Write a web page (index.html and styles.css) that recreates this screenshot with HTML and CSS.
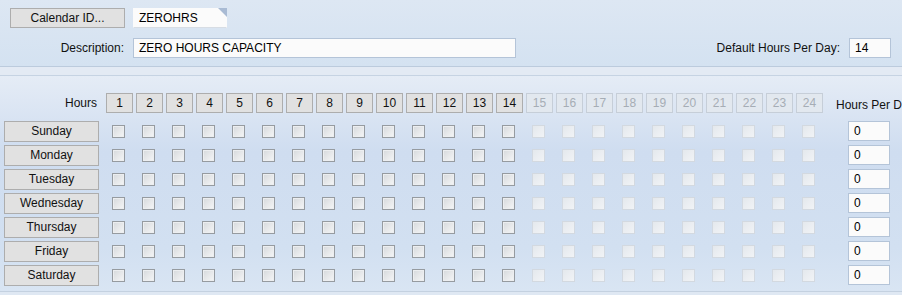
FILE: index.html
```html
<!DOCTYPE html>
<html lang="en">
<head>
    <meta charset="UTF-8">
    <meta name="viewport" content="width=device-width, initial-scale=1.0">
    <title>Calendar Maintenance</title>
    <link rel="stylesheet" href="styles.css">
</head>
<body>
    <div class="header-panel">
        <div class="row">
            <button class="btn btn-calendar">Calendar ID...</button>
            <div class="field field-id">ZEROHRS</div>
        </div>
        <div class="row row-desc">
            <label class="desc-label">Description:</label>
            <div class="field field-desc">ZERO HOURS CAPACITY</div>
            <div class="spacer"></div>
            <label class="default-label">Default Hours Per Day:</label>
            <div class="field field-small">14</div>
        </div>
    </div>
    <div class="divider"></div>

    <div class="hours-panel">
        <div class="hours-grid" id="hoursGrid">
            <div class="hours-label">Hours</div>
        </div>
    </div>

    <script>
        var grid = document.getElementById('hoursGrid');
        var days = ['Sunday', 'Monday', 'Tuesday', 'Wednesday', 'Thursday', 'Friday', 'Saturday'];
        var activeHours = 14;

        // header row with hour buttons
        for (var h = 1; h <= 24; h++) {
            var b = document.createElement('div');
            b.className = 'hour-btn' + (h > activeHours ? ' disabled' : '');
            b.innerText = h;
            grid.appendChild(b);
        }
        var perDay = document.createElement('div');
        perDay.className = 'perday-label';
        perDay.innerText = 'Hours Per Day';
        grid.appendChild(perDay);

        // one row per day
        days.forEach(function(day) {
            var d = document.createElement('div');
            d.className = 'day-btn';
            d.innerText = day;
            grid.appendChild(d);
            for (var h = 1; h <= 24; h++) {
                var c = document.createElement('div');
                c.className = 'cell';
                var box = document.createElement('span');
                box.className = 'chk' + (h > activeHours ? ' disabled' : '');
                c.appendChild(box);
                grid.appendChild(c);
            }
            var t = document.createElement('div');
            t.className = 'field field-perday';
            t.innerText = '0';
            grid.appendChild(t);
        });
    </script>
</body>
</html>
```

FILE: styles.css
```css
body {
    margin: 0;
    width: 902px;
    height: 295px;
    overflow: hidden;
    font-family: "Liberation Sans", Arial, sans-serif;
    font-size: 12px;
    color: #111;
    background-color: #dfe8f3;
}
.header-panel {
    height: 66px;
    box-sizing: border-box;
    padding-top: 8px;
    background: linear-gradient(#dde7f3, #d4e2f1);
}
.row {
    display: flex;
    align-items: center;
    padding-left: 10px;
}
.row-desc {
    margin-top: 10px;
    padding-right: 11px;
}
.btn {
    font-family: inherit;
    font-size: 12px;
    color: #111;
    background-color: #e1e1e1;
    border: 1px solid #adadad;
    padding: 0;
    margin: 0;
    box-sizing: border-box;
}
.btn-calendar {
    width: 115px;
    height: 20px;
    margin-right: 8px;
}
.field {
    box-sizing: border-box;
    height: 20px;
    line-height: 18px;
    padding-left: 5px;
    background-color: #fbfbfb;
    border: 1px solid #b4c4d8;
    color: #000;
}
.field-id {
    position: relative;
    width: 94px;
    border-color: #fbfbfb #fbfbfb #d7dde4 #fbfbfb;
}
.field-id::after {
    content: "";
    position: absolute;
    top: -1px;
    right: -1px;
    border-style: solid;
    border-width: 0 9px 9px 0;
    border-color: transparent #a9bbd4 transparent transparent;
}
.desc-label {
    width: 114px;
    text-align: right;
    margin-right: 9px;
}
.field-desc {
    width: 383px;
}
.spacer {
    flex: 1;
}
.default-label {
    margin-right: 9px;
}
.field-small {
    width: 42px;
}
.divider {
    height: 8px;
    border-top: 1px solid #bccbdd;
    border-bottom: 1px solid #c6d3e3;
    background-color: #e3eaf4;
}
.hours-panel {
    height: 216px;
    box-sizing: border-box;
    padding: 17px 0 0 4px;
    background: linear-gradient(#e5ecf6 0%, #cfddf0 35%, #d2e0f1 80%, #d9e5f3 100%);
    border-bottom: 1px solid #c4d1e0;
}
.hours-grid {
    display: grid;
    grid-template-columns: 102px repeat(24, 30px) 1fr;
    grid-template-rows: 25px repeat(7, 21px);
    row-gap: 3px;
}
.hours-label {
    align-self: start;
    height: 20px;
    line-height: 20px;
    text-align: right;
    padding-right: 9px;
}
.hour-btn {
    align-self: start;
    width: 27px;
    height: 20px;
    box-sizing: border-box;
    line-height: 18px;
    text-align: center;
    background-color: #e1e1e1;
    border: 1px solid #adadad;
}
.hour-btn.disabled {
    color: #a6adb5;
    background-color: #e2e8ef;
    border-color: #c6ced8;
}
.perday-label {
    align-self: start;
    height: 20px;
    line-height: 24px;
    padding-left: 10px;
    white-space: nowrap;
}
.day-btn {
    width: 95px;
    box-sizing: border-box;
    line-height: 19px;
    text-align: center;
    background-color: #e1e1e1;
    border: 1px solid #adadad;
}
.cell {
    display: flex;
    align-items: center;
    padding-left: 6px;
}
.chk {
    width: 13px;
    height: 13px;
    box-sizing: border-box;
    border: 1px solid #969ba0;
    background: linear-gradient(135deg, #d6d9dc, #f5f6f7);
    box-shadow: inset 0 0 0 1px #eceef0;
}
.chk.disabled {
    border-color: #d3d9e0;
    background: linear-gradient(135deg, #e4e8ed, #f1f3f6);
    box-shadow: none;
}
.field-perday {
    width: 42px;
    margin-left: 22px;
}
```
